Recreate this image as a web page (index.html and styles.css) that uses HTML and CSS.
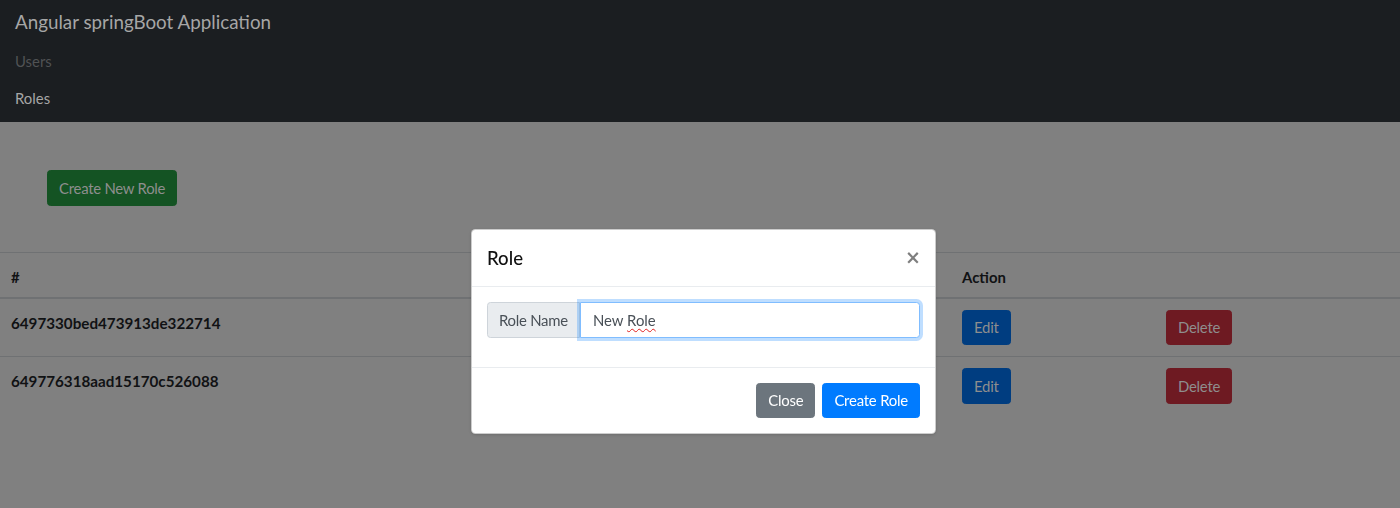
FILE: index.html
```html
<!DOCTYPE html>
<html lang="en">
<head>
<meta charset="utf-8">
<title>Angular springBoot Application</title>
<link rel="stylesheet" href="styles.css">
</head>
<body>
<nav class="navbar">
  <a class="brand">Angular springBoot Application</a>
  <ul class="nav">
    <li><a class="nav-link muted">Users</a></li>
    <li><a class="nav-link active">Roles</a></li>
  </ul>
</nav>
<main class="page">
  <div class="toolbar">
    <button class="btn btn-success">Create New Role</button>
  </div>
  <table class="table">
    <colgroup>
      <col class="c-id"><col class="c-name"><col class="c-edit"><col>
    </colgroup>
    <thead>
      <tr><th>#</th><th></th><th>Action</th><th></th></tr>
    </thead>
    <tbody>
      <tr>
        <td class="strong">6497330bed473913de322714</td>
        <td></td>
        <td><button class="btn btn-primary">Edit</button></td>
        <td><button class="btn btn-danger">Delete</button></td>
      </tr>
      <tr>
        <td class="strong">649776318aad15170c526088</td>
        <td></td>
        <td><button class="btn btn-primary">Edit</button></td>
        <td><button class="btn btn-danger">Delete</button></td>
      </tr>
    </tbody>
  </table>
</main>
<div class="modal-layer">
  <div class="modal">
    <div class="modal-header">
      <h4 class="modal-title">Role</h4>
      <button class="close" aria-label="Close">&times;</button>
    </div>
    <div class="modal-body">
      <div class="input-group">
        <span class="input-label">Role Name</span>
        <div class="form-control">New <span class="spell">Role</span></div>
      </div>
    </div>
    <div class="modal-footer">
      <button class="mbtn mbtn-secondary">Close</button>
      <button class="mbtn mbtn-primary">Create Role</button>
    </div>
  </div>
</div>
</body>
</html>
```
FILE: styles.css
```css
* { box-sizing: border-box; }
html, body { margin: 0; padding: 0; }
body {
  font-family: "Lato", "Liberation Sans", sans-serif;
  font-size: 14.9px;
  line-height: 1.5;
  background: #808080;
  color: #111214;
  height: 508px;
  overflow: hidden;
}

/* navbar */
.navbar {
  background: #1b1e21;
  padding: 5px 15px 0;
  height: 122px;
}
.brand {
  display: block;
  font-size: 18.8px;
  line-height: 28px;
  padding: 3px 0 6.5px;
  color: #a6a6a6;
}
.nav { list-style: none; margin: 0; padding: 0; }
.nav-link {
  display: block;
  padding: 7.5px 0;
  line-height: 22px;
  color: #a6a6a6;
}
.nav-link.muted { color: #505254; }

/* page */
.toolbar { padding: 48px 0 46px 47px; }

.btn {
  font-family: inherit;
  font-size: 14.9px;
  letter-spacing: -0.25px;
  line-height: 22.5px;
  padding: 5.5px 11px;
  border: 1px solid transparent;
  border-radius: 3.5px;
  color: #8e8e8e;
  cursor: pointer;
}
.btn-success { background: #145323; border-color: #145323; }
.btn-primary { background: #003d80; border-color: #003d80; }
.btn-danger { background: #6e1a22; border-color: #6e1a22; }

.table {
  width: 100%;
  border-collapse: collapse;
  table-layout: fixed;
}
.c-id { width: 475px; }
.c-name { width: 476px; }
.c-edit { width: 204px; }
.table th, .table td {
  text-align: left;
  vertical-align: top;
  padding: 11px;
  border-top: 1px solid #6f7173;
}
.table th { padding: 13px 11px 9px; border-bottom: 2px solid #6f7173; font-weight: 700; }
.table td.strong { padding-top: 13px; }
.table tbody tr:first-child td { border-top: 0; }
.strong { font-weight: 700; font-size: 15.2px; }

/* modal */
.modal-layer {
  position: fixed;
  inset: 0;
}
.modal {
  position: absolute;
  left: 471px;
  top: 229px;
  width: 465px;
  background: #fff;
  border: 1px solid rgba(0,0,0,.2);
  border-radius: 4.5px;
  color: #212529;
  box-shadow: 0 1px 3px rgba(0,0,0,.15);
}
.modal-header {
  display: flex;
  align-items: flex-start;
  justify-content: space-between;
  padding: 14px 15px;
  border-bottom: 1px solid #e9ecef;
}
.modal-title {
  margin: 0;
  font-size: 18.6px;
  line-height: 28px;
  font-weight: 500;
  color: #111;
}
.close {
  font-family: "DejaVu Sans", sans-serif;
  background: none;
  border: 0;
  padding: 0;
  margin: -1px -1px 0 0;
  font-size: 19px;
  font-weight: 700;
  line-height: 28px;
  color: #000;
  opacity: .5;
  cursor: pointer;
}
.modal-body { padding: 15px 15px 29px; }
.input-group { display: flex; height: 35.5px; }
.input-label {
  display: flex;
  align-items: center;
  padding: 0 11px;
  background: #e9ecef;
  border: 1px solid #ced4da;
  border-radius: 3.5px 0 0 3.5px;
  color: #495057;
  font-size: 14.9px;
  letter-spacing: -0.25px;
  white-space: nowrap;
}
.form-control {
  flex: 1;
  display: flex;
  align-items: center;
  padding: 0 12px;
  border: 1px solid #80bdff;
  border-radius: 0 3.5px 3.5px 0;
  box-shadow: 0 0 0 3px rgba(0,123,255,.25);
  color: #495057;
  background: #fff;
  white-space: pre;
}
.spell {
  text-decoration: underline wavy #e0201f;
  text-decoration-thickness: 1px;
  text-underline-offset: 2px;
}
.modal-footer {
  display: flex;
  justify-content: flex-end;
  gap: 7px;
  padding: 15px;
  border-top: 1px solid #e9ecef;
}
.mbtn {
  font-family: inherit;
  font-size: 14.9px;
  letter-spacing: -0.2px;
  line-height: 22.5px;
  padding: 5.5px 11px;
  border: 1px solid transparent;
  border-radius: 3.5px;
  color: #fff;
  cursor: pointer;
}
.mbtn-secondary { background: #6c757d; border-color: #6c757d; }
.mbtn-primary { background: #007bff; border-color: #007bff; }
```
